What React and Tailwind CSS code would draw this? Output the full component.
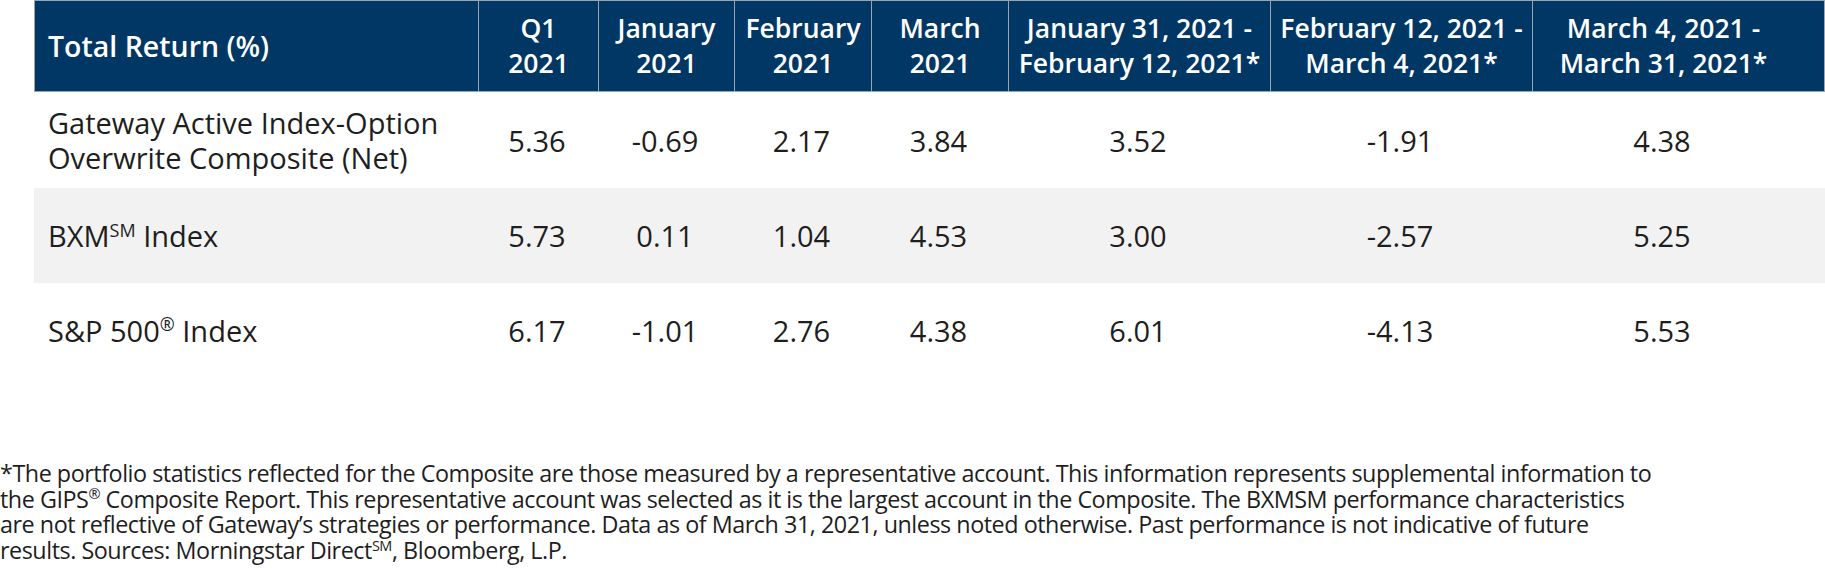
const cols = 'grid grid-cols-[443px_120px_136px_137px_137px_262px_262px_262px]';

const headers = [
  ['Q1', '2021'],
  ['January', '2021'],
  ['February', '2021'],
  ['March', '2021'],
  ['January 31, 2021 -', 'February 12, 2021*'],
  ['February 12, 2021 -', 'March 4, 2021*'],
  ['March 4, 2021 -', 'March 31, 2021*'],
];

const rows = [
  {
    name: (
      <>
        Gateway Active Index-Option
        <br />
        Overwrite Composite (Net)
      </>
    ),
    values: ['5.36', '-0.69', '2.17', '3.84', '3.52', '-1.91', '4.38'],
    bg: 'bg-white',
    h: 'h-[96px]',
  },
  {
    name: (
      <>
        BXM<sup className="text-[0.62em] top-[-0.55em]">SM</sup> Index
      </>
    ),
    values: ['5.73', '0.11', '1.04', '4.53', '3.00', '-2.57', '5.25'],
    bg: 'bg-[#f2f2f2]',
    h: 'h-[95px]',
  },
  {
    name: (
      <>
        S&amp;P 500<sup className="text-[0.62em] top-[-0.6em]">®</sup> Index
      </>
    ),
    values: ['6.17', '-1.01', '2.76', '4.38', '6.01', '-4.13', '5.53'],
    bg: 'bg-white',
    h: 'h-[95px]',
  },
];

export default function App() {
  return (
    <div className="w-[1825px] h-[569px] bg-white overflow-hidden font-['Open_Sans',sans-serif] text-[#1e1e1e]">
      {/* Table */}
      <div className="pl-[34px]">
        <div className={`${cols} h-[92px] bg-[#003764] border border-[#9aa5b1] text-white text-[26.5px] leading-[35px] font-semibold`}>
          <div className="flex items-center pl-[13px] text-[28.5px]">Total Return (%)</div>
          {headers.map(([a, b], i) => (
            <div key={i} className="flex flex-col items-center justify-center border-l border-[#9aa5b1] text-center whitespace-nowrap">
              <span>{a}</span>
              <span>{b}</span>
            </div>
          ))}
        </div>

        {rows.map((r, i) => (
          <div key={i} className={`${cols} ${r.h} ${r.bg} text-[29px] leading-[35px]`}>
            <div className="flex items-center pl-[14px] whitespace-nowrap">
              <span>{r.name}</span>
            </div>
            {r.values.map((v, j) => (
              <div key={j} className="flex items-center justify-center">
                {v}
              </div>
            ))}
          </div>
        ))}
      </div>

      {/* Footnote */}
      <div className="mt-[83px] text-[23.35px] leading-[25.7px] tracking-[-0.02em] whitespace-nowrap text-[#1e1e1e]">
        *The portfolio statistics reflected for the Composite are those measured by a representative account. This information represents supplemental information to
        <br />
        the GIPS<sup className="text-[0.62em] top-[-0.6em]">®</sup> Composite Report. This representative account was selected as it is the largest account in the Composite. The BXMSM performance characteristics
        <br />
        are not reflective of Gateway’s strategies or performance. Data as of March 31, 2021, unless noted otherwise. Past performance is not indicative of future
        <br />
        results. Sources: Morningstar Direct<sup className="text-[0.62em] top-[-0.55em]">SM</sup>, Bloomberg, L.P.
      </div>
    </div>
  );
}
